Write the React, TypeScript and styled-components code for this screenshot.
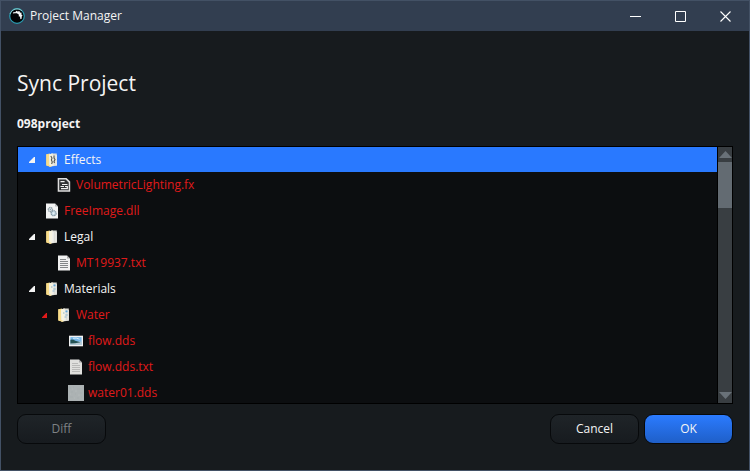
import React, { useState } from 'react';
import styled, { createGlobalStyle } from 'styled-components';

const GlobalStyle = createGlobalStyle`
  *, *::before, *::after { box-sizing: border-box; }
  html, body, #root { height: 100%; }
  body { margin: 0; background: #171b1e; }
  button { font: inherit; color: inherit; padding: 0; border: 0; background: none; cursor: pointer; }
`;

const Window = styled.div`
  display: flex;
  flex-direction: column;
  min-height: 100%;
  border: 1px solid #435165;
  background: #171b1e;
  color: #f4f4f4;
  font-family: "Open Sans", "Noto Sans", sans-serif;
  font-size: 12px;
  line-height: 16px;
`;

const TitleBar = styled.header`
  display: flex;
  align-items: center;
  height: 30px;
  padding: 0 1px 0 8px;
  background: #323e50;
`;

const WindowTitle = styled.span`
  flex: 1;
  padding-left: 5px;
`;

const WindowButton = styled.button`
  display: flex;
  align-items: center;
  justify-content: center;
  width: 45px;
  height: 30px;
  &:hover { background: #46566b; }
`;

const Body = styled.main`
  flex: 1;
  display: flex;
  flex-direction: column;
  padding: 36px 16px 26px;
`;

const Heading = styled.h1`
  margin: 0 0 16px;
  font-size: 21px;
  line-height: 32px;
  font-weight: 400;
`;

const ProjectName = styled.h2`
  margin: 0 0 14px;
  font-size: 12px;
  line-height: 17px;
  font-weight: 700;
`;

const TreeFrame = styled.div`
  display: flex;
  flex: 1 0 258px;
  border: 1px solid #000;
  background: #0c0e10;
`;

const Tree = styled.div`
  flex: 1;
  height: 256px;
  overflow: hidden;
  border-right: 1px solid #000;
`;

const Row = styled.div<{ $level: number; $selected?: boolean; $missing?: boolean }>`
  display: flex;
  align-items: center;
  height: ${p => (p.$selected ? 25 : 26)}px;
  padding-left: ${p => 8 + p.$level * 12}px;
  background: ${p => (p.$selected ? '#2979ff' : 'transparent')};
  color: ${p => (p.$missing ? '#e01a1a' : '#f4f4f4')};
`;

const twistySize = `
  flex: none;
  width: 12px;
  height: 16px;
  margin-right: 6px;
`;

const Twisty = styled.button<{ $small?: boolean }>`
  ${twistySize}
  display: flex;
  align-items: center;
  justify-content: center;
  svg { width: ${p => (p.$small ? 5 : 6)}px; height: ${p => (p.$small ? 5 : 6)}px; }
`;

const TwistySpace = styled.span`
  ${twistySize}
`;

const Label = styled.span`
  padding-left: 4px;
  white-space: nowrap;
`;

const ScrollBar = styled.div`
  display: flex;
  flex-direction: column;
  width: 14px;
  background: #393e42;
`;

const ScrollButton = styled.button`
  display: flex;
  align-items: center;
  justify-content: center;
  height: 15px;
`;

const ScrollTrack = styled.div`
  flex: 1;
`;

const ScrollThumb = styled.div`
  height: 46px;
  background: #636b72;
`;

const Footer = styled.footer`
  display: flex;
  gap: 5px;
  padding-top: 10px;
`;

const Spacer = styled.div`
  flex: 1;
`;

const ActionButton = styled.button<{ $primary?: boolean }>`
  width: 89px;
  height: 30px;
  border: 1px solid #07090b;
  border-radius: 9px;
  background: ${p =>
    p.$primary ? 'linear-gradient(#2b7bff, #1f5fc8)' : 'linear-gradient(#1f2428, #171b1f)'};
  &:disabled { color: #7e8285; cursor: default; }
`;

type IconKind = 'effects' | 'fx' | 'dll' | 'folder' | 'lines' | 'materials' | 'image' | 'text' | 'texture';

function AppIcon() {
  return (
    <svg width="16" height="16" viewBox="0 0 16 16" aria-hidden="true">
      <circle cx="8" cy="8" r="7.3" fill="#020405" stroke="#2a9bb0" strokeWidth="1.2" />
      <path d="M1.1 6A7.3 7.3 0 0 1 13 2.8" fill="none" stroke="#8cc8c8" strokeWidth="1" />
      <path
        d="M3.8 5.6 4.6 3.9 6.4 4.2 7.2 2.8 8.8 3.6 10.4 3 11 4.4 12.6 4.8 12.4 6.4 13.6 7.6 12.6 8.8 12.8 10.4 11.4 11.2 11 8.6 9.8 8.4 9.8 6.4 7.8 5.2 6 5.2Z"
        fill="#f4f6f6"
      />
    </svg>
  );
}

function FileIcon({ kind }: { kind: IconKind }) {
  const folder = kind === 'effects' || kind === 'folder' || kind === 'materials';
  return (
    <svg width="16" height="16" viewBox="0 0 16 16" aria-hidden="true">
      {folder && (
        <>
          <path d="M2.3 2.3 6 1.4V14.6L2.3 13.7Z" fill="#f6d982" />
          <path d="M5 2.5 8 1.4 12.8 1.6V13.8L6 14.6 5 14Z" fill="#dcdcd6" />
          <path d="M5 2.5 8.6 1.2V14L5.5 14.7Z" fill="#f7f3df" />
          <path d="M2.3 12.9 7 15 7.4 14 5 13V3L2.3 2.3Z" fill="#f8dc8b" />
          <path d="M9 3V13.7M12.2 3V13.5" stroke="#f5f5f2" strokeWidth="1" />
        </>
      )}
      {kind === 'effects' && (
        <path d="M6.8 4 8 6 7.4 8 8.3 10 7.6 12M10 3.5V6L11 7.5 10 9.5 10.5 11" fill="none" stroke="#55564f" strokeWidth="1.1" />
      )}
      {kind === 'materials' && (
        <>
          <path d="M9.5 3.5h2v1.8h-2z" fill="#5fa6da" />
          <path d="M7 6h1.5M9.3 8h2.5M8.5 10h2" stroke="#8cb6cd" />
        </>
      )}
      {kind === 'fx' && (
        <>
          <path d="M1.7 1H10.5L14.2 4.6V14.7H1.7Z" fill="#dedede" />
          <path d="M3.2 2.5H9.7L12.7 5.4V13.2H3.2Z" fill="#303234" />
          <path d="M4.5 4.6H8.6M6 7.5H11.5M4.5 9.5H8M5 11.6H11.3V9.5H9" fill="none" stroke="#f1f1f1" strokeWidth="1.2" />
        </>
      )}
      {kind === 'dll' && (
        <>
          <path d="M2 .6H11L14 3.6V15.6H2Z" fill="#f2f3f3" />
          <path d="M11 .6V3.6H14Z" fill="#b8bcbd" />
          <circle cx="6.4" cy="6.6" r="2.1" fill="#dce6ea" stroke="#8f9da4" strokeWidth="1.3" strokeDasharray="1.4 .5" />
          <circle cx="9.6" cy="10.2" r="2.5" fill="#c8dce8" stroke="#859aa6" strokeWidth="1.3" strokeDasharray="1.4 .5" />
          <circle cx="6.4" cy="6.6" r=".7" fill="#8498a2" />
          <circle cx="9.6" cy="10.2" r=".8" fill="#eef4f6" />
        </>
      )}
      {(kind === 'lines' || kind === 'text') && (
        <>
          <path d="M2 .4H11L14 3.4V15.6H2Z" fill={kind === 'lines' ? '#f1f1f1' : '#e0e0dd'} />
          <path d="M11 .4V3.6H14Z" fill="#aaa" />
          <path
            d="M4 4.5H10M4 6.5H12M4 8.5H12M4 10.5H12M4 12.5H12"
            stroke={kind === 'lines' ? '#838688' : '#b9b9b7'}
            strokeWidth="1"
          />
        </>
      )}
      {kind === 'image' && (
        <>
          <path d="M1 2.7H15V13.3H1Z" fill="#f1f1f1" />
          <path d="M2.4 4.1H13.6V11.9H2.4Z" fill="#78b8e8" />
          <path d="M2.4 8.6H13.6V11.9H2.4Z" fill="#b8cbd3" />
          <path d="M2.4 6.7Q5 5.9 7.2 7.7L12.5 9.3 7 10.2 2.4 10.5Z" fill="#245354" />
          <path d="M5 5.3Q8 4.4 11.6 6.2" fill="none" stroke="#d7efff" strokeWidth="1" />
        </>
      )}
      {kind === 'texture' && (
        <>
          <path d="M0 0H16V16H0Z" fill="#acb2b3" />
          <path d="M1 3h2M5 2h1M9 4h3M3 7h2M12 8h2M7 9h1M2 12h3M9 13h2M13 12h1" stroke="#a6adae" />
          <path d="M4 4h1M12 2h2M7 6h2M2 9h1M10 10h2M6 13h1" stroke="#b3b9b9" />
        </>
      )}
    </svg>
  );
}

interface Item {
  name: string;
  icon: IconKind;
  level: number;
  open?: boolean;
  missing?: boolean;
}

const items: Item[] = [
  { name: 'Effects', icon: 'effects', level: 0, open: true },
  { name: 'VolumetricLighting.fx', icon: 'fx', level: 1, missing: true },
  { name: 'FreeImage.dll', icon: 'dll', level: 0, missing: true },
  { name: 'Legal', icon: 'folder', level: 0, open: true },
  { name: 'MT19937.txt', icon: 'lines', level: 1, missing: true },
  { name: 'Materials', icon: 'materials', level: 0, open: true },
  { name: 'Water', icon: 'materials', level: 1, open: true, missing: true },
  { name: 'flow.dds', icon: 'image', level: 2, missing: true },
  { name: 'flow.dds.txt', icon: 'text', level: 2, missing: true },
  { name: 'water01.dds', icon: 'texture', level: 2, missing: true },
];

export default function App() {
  const [selected, setSelected] = useState('Effects');
  return (
    <Window>
      <GlobalStyle />
      <TitleBar>
        <AppIcon />
        <WindowTitle>Project Manager</WindowTitle>
        <WindowButton aria-label="Minimize">
          <svg width="11" height="11" viewBox="0 0 11 11"><path d="M0 5.5H11" stroke="#fff" /></svg>
        </WindowButton>
        <WindowButton aria-label="Maximize">
          <svg width="11" height="11" viewBox="0 0 11 11"><path d="M.5.5H10.5V10.5H.5Z" fill="none" stroke="#fff" /></svg>
        </WindowButton>
        <WindowButton aria-label="Close">
          <svg width="11" height="11" viewBox="0 0 11 11"><path d="M.5.5 10.5 10.5M10.5.5.5 10.5" stroke="#fff" strokeWidth="1.1" /></svg>
        </WindowButton>
      </TitleBar>
      <Body>
        <Heading>Sync Project</Heading>
        <ProjectName>098project</ProjectName>
        <TreeFrame>
          <Tree role="tree" aria-label="Project files">
            {items.map(item => (
              <Row
                key={item.name}
                role="treeitem"
                aria-level={item.level + 1}
                aria-expanded={item.open}
                aria-selected={item.name === selected}
                $level={item.level}
                $selected={item.name === selected}
                $missing={item.missing}
                onClick={() => setSelected(item.name)}
              >
                {item.open ? (
                  <Twisty $small={item.level > 0} aria-label={`Collapse ${item.name}`}>
                    <svg viewBox="0 0 6 6"><path d="M6 0V6H0V5L5 0Z" fill="currentColor" /></svg>
                  </Twisty>
                ) : (
                  <TwistySpace />
                )}
                <FileIcon kind={item.icon} />
                <Label>{item.name}</Label>
              </Row>
            ))}
          </Tree>
          <ScrollBar>
            <ScrollButton aria-label="Scroll up">
              <svg width="13" height="7" viewBox="0 0 13 7"><path d="M6.5 0 13 7H0Z" fill="#697178" /></svg>
            </ScrollButton>
            <ScrollTrack>
              <ScrollThumb />
            </ScrollTrack>
            <ScrollButton aria-label="Scroll down">
              <svg width="13" height="7" viewBox="0 0 13 7"><path d="M0 0H13L6.5 7Z" fill="#697178" /></svg>
            </ScrollButton>
          </ScrollBar>
        </TreeFrame>
        <Footer>
          <ActionButton disabled>Diff</ActionButton>
          <Spacer />
          <ActionButton>Cancel</ActionButton>
          <ActionButton $primary>OK</ActionButton>
        </Footer>
      </Body>
    </Window>
  );
}
